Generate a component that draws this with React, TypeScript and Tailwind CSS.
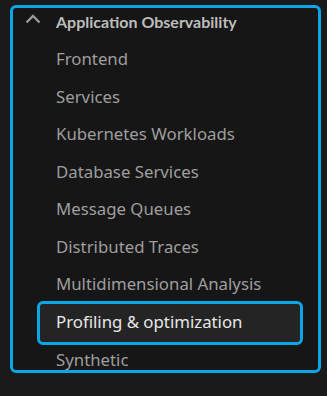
import React from "react";

const items = [
  "Frontend",
  "Services",
  "Kubernetes Workloads",
  "Database Services",
  "Message Queues",
  "Distributed Traces",
  "Multidimensional Analysis",
];

export default function App() {
  return (
    <div
      className="w-[327px] h-[396px] bg-[#1a1a1a] pt-[5px] pl-[10px] overflow-hidden"
      style={{ fontFamily: '"Noto Sans", sans-serif' }}
    >
      <div className="w-[311px] h-[368px] border-[3px] border-[#0aa6e6] rounded-[6px] bg-[#161616] overflow-hidden">
        <div className="flex items-center h-[27px]">
          <svg width="16" height="10" viewBox="0 0 16 10" className="ml-[12px] self-start mt-[6px]">
            <path d="M1.5 8.5 L8 2 L14.5 8.5" fill="none" stroke="#9a9a9a" strokeWidth="2.4" />
          </svg>
          <span
            className="ml-[15px] text-[16px] font-bold text-[#bdbdbd]"
            style={{ fontFamily: 'Lato, "Noto Sans", sans-serif' }}
          >
            Application Observability
          </span>
        </div>
        <div className="flex flex-col mt-[5px]">
          {items.map((t) => (
            <div key={t} className="h-[37.5px] flex items-center pl-[43px] text-[16.8px] text-[#9e9e9e]">
              {t}
            </div>
          ))}
          <div className="ml-[24px] mt-[-2px] w-[266px] h-[44px] border-[3px] border-[#0aa6e6] rounded-[6px] bg-[#242424] flex items-center pl-[16px] pb-[2px] text-[16.8px] text-[#e8e8e8]">
            Profiling &amp; optimization
          </div>
          <div className="h-[37.5px] mt-[-4px] flex items-center pl-[43px] text-[16.8px] text-[#9e9e9e]">Synthetic</div>
        </div>
      </div>
    </div>
  );
}
